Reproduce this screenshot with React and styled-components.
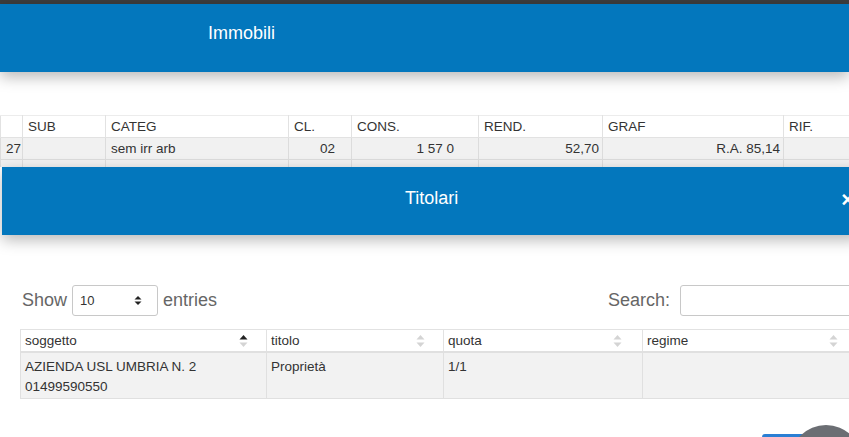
import styled, { createGlobalStyle } from 'styled-components';

const GlobalStyle = createGlobalStyle`
    html, body {
        margin: 0;
        padding: 0;
        background: #ffffff;
        overflow: hidden;
    }
    body {
        font-family: 'Liberation Sans', Arial, sans-serif;
        color: #333;
    }
`;

const blue = '#0377bd';

const Page = styled.div`
    position: relative;
    width: 849px;
    height: 437px;
    overflow: hidden;
    background: #fff;
`;

const TopStrip = styled.div`
    height: 4px;
    background: #3d3d3d;
`;

const ModalHeader = styled.div`
    display: flex;
    align-items: flex-start;
    height: 68px;
    box-sizing: border-box;
    width: ${({ $width }) => $width};
    margin-left: ${({ $offset }) => $offset || 0};
    padding-top: ${({ $top }) => $top};
    padding-left: ${({ $titleX }) => $titleX};
    padding-right: 6px;
    background: ${blue};
    box-shadow: 0 5px 14px rgba(0, 0, 0, 0.28);
    position: relative;
    z-index: 2;
`;

const Title = styled.span`
    color: #fff;
    font-size: 18px;
    line-height: 21px;
`;

const Close = styled.span`
    margin-left: auto;
    margin-top: 1px;
    color: #fff;
    font-size: 22px;
    font-weight: bold;
    line-height: 1;
`;

const UpperTableWrap = styled.div`
    margin-top: 43px;
    height: 52px;
    overflow: hidden;
`;

const Grid = styled.table`
    border-collapse: collapse;
    table-layout: fixed;
    width: ${({ $width }) => $width};
    font-size: 13.5px;
    color: #333;
`;

const HeadCell = styled.th`
    font-weight: normal;
    text-align: left;
    height: 21px;
    padding: 0 5px;
    border: 1px solid #e2e2e2;
    border-top: 1px solid #ececec;
    background: #fff;
    white-space: nowrap;
`;

const Cell = styled.td`
    height: 21px;
    padding: 0 ${({ $pr }) => $pr || '5px'} 0 5px;
    text-align: ${({ $right }) => ($right ? 'right' : 'left')};
    border: 1px solid #dcdcdc;
    background: #f1f1f1;
    white-space: nowrap;
`;

const Lower = styled.div`
    padding: 50px 0 0 22px;
`;

const Controls = styled.div`
    display: flex;
    align-items: center;
    justify-content: space-between;
    height: 31px;
    margin-right: -21px;
    color: #666;
    font-size: 18px;
`;

const LengthControl = styled.label`
    display: flex;
    align-items: center;
    gap: 5px;
`;

const SelectBox = styled.div`
    display: flex;
    align-items: center;
    justify-content: space-between;
    box-sizing: border-box;
    width: 86px;
    height: 31px;
    padding: 0 15px 0 7px;
    border: 1px solid #c8c8c8;
    border-radius: 3px;
    font-size: 13px;
    color: #333;
    background: #fff;
`;

const SearchControl = styled.label`
    display: flex;
    align-items: center;
    gap: 10px;
`;

const SearchInput = styled.div`
    width: 190px;
    height: 31px;
    box-sizing: border-box;
    border: 1px solid #c8c8c8;
    border-radius: 3px;
    background: #fff;
`;

const Table2Wrap = styled.div`
    margin-top: 13px;
    margin-left: -2px;
`;

const SortHead = styled.th`
    font-weight: normal;
    text-align: left;
    height: 21px;
    padding: 0 0 0 4px;
    border: 1px solid #e2e2e2;
    border-bottom: 2px solid #e0e0e0;
    background: #fff;
`;

const HeadInner = styled.div`
    display: flex;
    align-items: center;
    justify-content: space-between;
    padding-right: ${({ $pr }) => $pr};
`;

const BodyCell = styled.td`
    vertical-align: top;
    padding: 4px 4px 1px;
    line-height: 20px;
    border: 1px solid #e0e0e0;
    background: #f2f2f2;
`;

const Footer = styled.div`
    position: absolute;
    right: 0;
    bottom: 0;
    width: 100px;
    height: 20px;
`;

const FooterButton = styled.div`
    position: absolute;
    left: 13px;
    top: 17px;
    width: 44px;
    height: 20px;
    border-radius: 3px;
    background: #2a7fd4;
`;

const Fab = styled.div`
    position: absolute;
    left: 41px;
    top: 8px;
    width: 72px;
    height: 72px;
    border-radius: 50%;
    background: #6b6e73;
`;

function SortIcon({ active }) {
    return (
        <svg width="9" height="14" viewBox="0 0 9 14">
            <path d="M0.5 5.5 L4.5 1 L8.5 5.5 Z" fill={active ? '#222' : '#d4d4d4'} />
            <path d="M0.5 8.5 L4.5 13 L8.5 8.5 Z" fill="#d4d4d4" />
        </svg>
    );
}

function SelectArrows() {
    return (
        <svg width="8" height="11" viewBox="0 0 8 11">
            <path d="M0.5 4.5 L4 1 L7.5 4.5 Z" fill="#222" />
            <path d="M0.5 6.5 L4 10 L7.5 6.5 Z" fill="#222" />
        </svg>
    );
}

const upperCols = [22, 83, 183, 63, 127, 124, 181, 90];
const upperHeads = ['', 'SUB', 'CATEG', 'CL.', 'CONS.', 'REND.', 'GRAF', 'RIF.'];

const lowerCols = [246, 177, 199, 208];
const lowerHeads = [
    { label: 'soggetto', pr: '18px', active: true },
    { label: 'titolo', pr: '18px' },
    { label: 'quota', pr: '20px' },
    { label: 'regime', pr: '12px' },
];

function App() {
    return (
        <Page>
            <GlobalStyle />
            <TopStrip />
            <ModalHeader $width="849px" $titleX="208px" $top="19px">
                <Title>Immobili</Title>
            </ModalHeader>

            <UpperTableWrap>
                <Grid $width="873px">
                    <colgroup>
                        {upperCols.map((w, i) => (
                            <col key={i} style={{ width: w }} />
                        ))}
                    </colgroup>
                    <thead>
                        <tr>
                            {upperHeads.map((h, i) => (
                                <HeadCell key={i}>{h}</HeadCell>
                            ))}
                        </tr>
                    </thead>
                    <tbody>
                        <tr>
                            <Cell $right $pr="2px">27</Cell>
                            <Cell />
                            <Cell>sem irr arb</Cell>
                            <Cell $right $pr="16px">02</Cell>
                            <Cell $right $pr="24px">1 57 0</Cell>
                            <Cell $right $pr="3px">52,70</Cell>
                            <Cell $right $pr="3px">R.A. 85,14</Cell>
                            <Cell />
                        </tr>
                        <tr>
                            {upperCols.map((w, i) => (
                                <Cell key={i} />
                            ))}
                        </tr>
                    </tbody>
                </Grid>
            </UpperTableWrap>

            <ModalHeader $width="858px" $offset="2px" $titleX="403px" $top="21px">
                <Title>Titolari</Title>
                <Close>×</Close>
            </ModalHeader>

            <Lower>
                <Controls>
                    <LengthControl>
                        Show
                        <SelectBox>
                            10
                            <SelectArrows />
                        </SelectBox>
                        entries
                    </LengthControl>
                    <SearchControl>
                        Search:
                        <SearchInput />
                    </SearchControl>
                </Controls>

                <Table2Wrap>
                    <Grid $width="830px">
                        <colgroup>
                            {lowerCols.map((w, i) => (
                                <col key={i} style={{ width: w }} />
                            ))}
                        </colgroup>
                        <thead>
                            <tr>
                                {lowerHeads.map((h) => (
                                    <SortHead key={h.label}>
                                        <HeadInner $pr={h.pr}>
                                            {h.label}
                                            <SortIcon active={h.active} />
                                        </HeadInner>
                                    </SortHead>
                                ))}
                            </tr>
                        </thead>
                        <tbody>
                            <tr>
                                <BodyCell>
                                    AZIENDA USL UMBRIA N. 2
                                    <br />
                                    01499590550
                                </BodyCell>
                                <BodyCell>Proprietà</BodyCell>
                                <BodyCell>1/1</BodyCell>
                                <BodyCell />
                            </tr>
                        </tbody>
                    </Grid>
                </Table2Wrap>
            </Lower>

            <Footer>
                <FooterButton />
                <Fab />
            </Footer>
        </Page>
    );
}

export default App;
